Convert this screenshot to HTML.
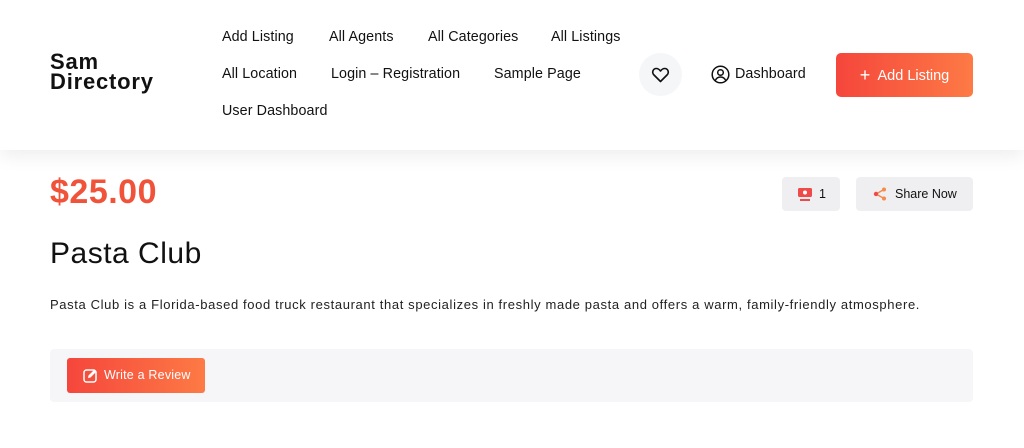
<!DOCTYPE html>
<html><head><style>
*{margin:0;padding:0;box-sizing:border-box}
body{width:1024px;height:448px;overflow:hidden;background:#fff;font-family:"Liberation Sans",sans-serif;color:#111;position:relative}
.hdr{position:absolute;left:0;top:0;width:1024px;height:150px;background:#fff;box-shadow:0 6px 18px rgba(0,0,0,0.07)}
.logo{position:absolute;left:50px;top:52px;font-size:22px;font-weight:bold;line-height:20px;letter-spacing:0.8px}
.nav{position:absolute;font-size:14.3px;color:#111;letter-spacing:0.1px}
.heart{position:absolute;left:639px;top:53px;width:43px;height:43px;border-radius:50%;background:#f5f6f8}
.btn{position:absolute;left:836px;top:53px;width:137px;height:44px;border-radius:5px;background:linear-gradient(90deg,#f5463c,#fd7a45);color:#fff;font-size:14.5px;line-height:44px;text-align:center}
.price{position:absolute;left:50px;top:173px;font-size:34px;font-weight:bold;color:#f0533a;letter-spacing:0.5px}
.pill{position:absolute;top:177px;height:34px;border-radius:4px;background:#efeff1;font-size:12.5px;line-height:34px}
.title{position:absolute;left:50px;top:237px;font-size:30px;color:#111;letter-spacing:0.5px}
.desc{position:absolute;left:50px;top:297px;font-size:13px;color:#222;letter-spacing:0.63px}
.box{position:absolute;left:50px;top:349px;width:923px;height:53px;background:#f6f6f8;border-radius:4px}
.rev{position:absolute;left:67px;top:358px;width:138px;height:35px;border-radius:3px;background:linear-gradient(90deg,#f5463c,#fd7a45);color:#fff;font-size:12.5px;line-height:35px;padding-left:37px;letter-spacing:0.2px}
</style></head><body>
<div class="hdr">
<div class="logo">Sam<br>Directory</div>
<div class="nav" style="left:222px;top:29px">Add Listing</div>
<div class="nav" style="left:329px;top:29px">All Agents</div>
<div class="nav" style="left:428px;top:29px">All Categories</div>
<div class="nav" style="left:551px;top:29px">All Listings</div>
<div class="nav" style="left:222px;top:66px">All Location</div>
<div class="nav" style="left:331px;top:66px">Login – Registration</div>
<div class="nav" style="left:494px;top:66px">Sample Page</div>
<div class="nav" style="left:222px;top:103px">User Dashboard</div>
<div class="heart"><svg width="43" height="43" viewBox="0 0 43 43"><path d="M21.5 28.5 L15 22 C12.5 19.5 14 15.5 17.3 15.5 C19.2 15.5 20.6 16.8 21.5 18 C22.4 16.8 23.8 15.5 25.7 15.5 C29 15.5 30.5 19.5 28 22 Z" fill="none" stroke="#111" stroke-width="1.6" stroke-linejoin="round"/></svg></div>
<svg style="position:absolute;left:711px;top:65px" width="19" height="19" viewBox="0 0 19 19"><circle cx="9.5" cy="9.5" r="8.3" fill="none" stroke="#111" stroke-width="1.5"/><circle cx="9.5" cy="7.5" r="2.8" fill="none" stroke="#111" stroke-width="1.5"/><path d="M4.3 15.5 C5.5 12.8 7.5 12 9.5 12 C11.5 12 13.5 12.8 14.7 15.5" fill="none" stroke="#111" stroke-width="1.5"/></svg>
<div class="nav" style="left:735px;top:66px">Dashboard</div>
<div class="btn"><span style="font-size:18px;vertical-align:-1px">+</span>&nbsp; Add Listing</div>
</div>
<div class="price">$25.00</div>
<div class="pill" style="left:782px;width:58px"><svg style="position:absolute;left:16px;top:11px" width="14" height="13" viewBox="0 0 14 13"><rect x="0" y="0" width="14" height="9" rx="1.5" fill="#ef4a4a"/><circle cx="7" cy="4.5" r="2" fill="#fff"/><rect x="2" y="11" width="10" height="2" fill="#ef4a4a"/></svg><span style="position:absolute;left:37px">1</span></div>
<div class="pill" style="left:856px;width:117px"><svg style="position:absolute;left:17px;top:10px" width="14" height="14" viewBox="0 0 14 14"><path d="M3 7 L11 2.5 M3 7 L11 11.5" stroke="#f48b4a" stroke-width="1.5"/><circle cx="3" cy="7" r="2.2" fill="#ef4a4a"/><circle cx="11" cy="2.5" r="2" fill="#f48b4a"/><circle cx="11" cy="11.5" r="2" fill="#f48b4a"/></svg><span style="position:absolute;left:39px">Share Now</span></div>
<div class="title">Pasta Club</div>
<div class="desc">Pasta Club is a Florida-based food truck restaurant that specializes in freshly made pasta and offers a warm, family-friendly atmosphere.</div>
<div class="box"></div>
<div class="rev"><svg style="position:absolute;left:16px;top:10px" width="15" height="15" viewBox="0 0 15 15"><rect x="1" y="2" width="12" height="12" rx="2.5" fill="none" stroke="#fff" stroke-width="1.5"/><path d="M5 10 L5.5 7.5 L11.5 1.5 L13.5 3.5 L7.5 9.5 Z" fill="#fff"/></svg>Write a Review</div>
</body></html>
